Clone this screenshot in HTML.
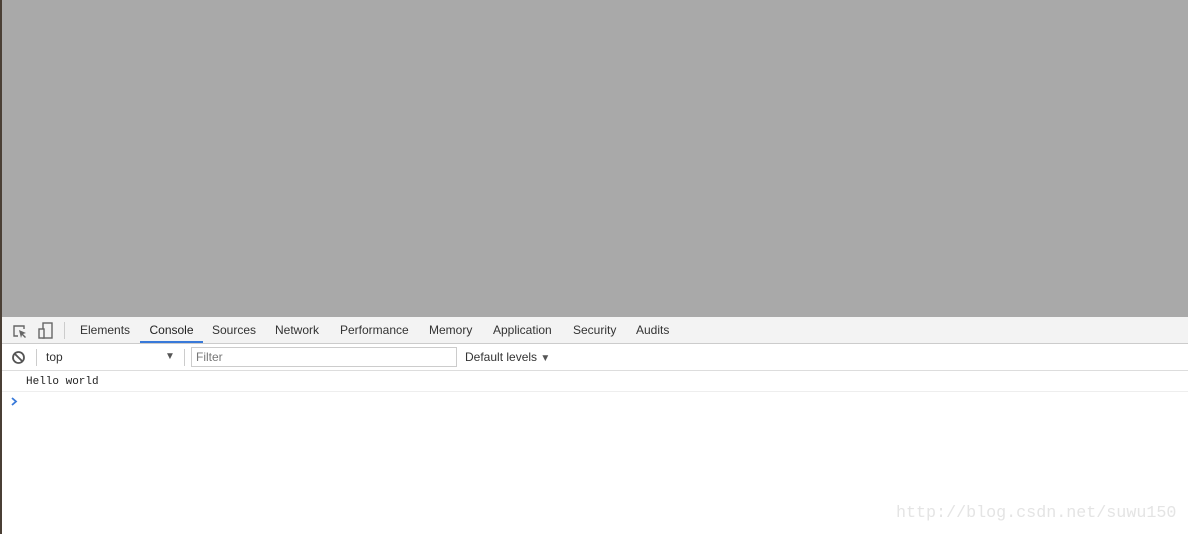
<!DOCTYPE html>
<html><head><meta charset="utf-8"><style>
*{margin:0;padding:0;box-sizing:border-box}
body{width:1188px;height:534px;overflow:hidden;background:#fff;font-family:"Liberation Sans",sans-serif;position:relative}
.page{position:absolute;left:0;top:0;width:1188px;height:317px;background:#a9a9a9}
.edge{position:absolute;left:0;top:0;width:2px;height:534px;background:#4a3f35}
.tb{position:absolute;left:2px;top:317px;width:1186px;height:27px;background:#f3f3f3;border-bottom:1px solid #ccc}
.tab{position:absolute;top:0;height:26px;line-height:26px;font-size:12px;color:#333}
.sel{color:#222;border-bottom:2px solid #3879d9}
.tb2{position:absolute;left:2px;top:344px;width:1186px;height:27px;background:#fff;border-bottom:1px solid #ddd;font-size:12px;color:#333}
.row{position:absolute;left:2px;top:372px;width:1186px;height:20px;border-bottom:1px solid #eee;font-family:"Liberation Mono","DejaVu Sans Mono",monospace;font-size:11px;color:#222;padding-left:24px;padding-top:4px;line-height:13px}
.wm{position:absolute;left:896px;top:504px;font-family:"Liberation Mono",monospace;font-size:16.7px;color:#e4e4e4}
</style></head><body>
<div class="page"></div>
<div class="tb">
<svg style="position:absolute;left:10px;top:6px" width="16" height="16" viewBox="0 0 16 16"><path d="M6 13H2V3h10v3" fill="none" stroke="#666" stroke-width="1.4"/><path d="M7 7l7 3-3 1 3 3-1 1-3-3-1 3z" fill="#666"/></svg>
<svg style="position:absolute;left:36px;top:5px" width="16" height="17" viewBox="0 0 16 17"><rect x="5" y="1" width="9" height="15" fill="none" stroke="#666" stroke-width="1.4"/><rect x="1" y="7" width="5" height="9" fill="#f3f3f3" stroke="#666" stroke-width="1.4"/></svg>
<div style="position:absolute;left:62px;top:5px;width:1px;height:17px;background:#ccc"></div>
<div class="tab" style="left:78px">Elements</div>
<div class="tab sel" style="left:138px;width:63px;text-align:center">Console</div>
<div class="tab" style="left:210px">Sources</div>
<div class="tab" style="left:273px">Network</div>
<div class="tab" style="left:338px">Performance</div>
<div class="tab" style="left:427px">Memory</div>
<div class="tab" style="left:491px">Application</div>
<div class="tab" style="left:571px">Security</div>
<div class="tab" style="left:634px">Audits</div>
</div>
<div class="tb2">
<svg style="position:absolute;left:9px;top:6px" width="15" height="15" viewBox="0 0 15 15"><circle cx="7.5" cy="7.5" r="5.5" fill="none" stroke="#555" stroke-width="1.8"/><path d="M3.7 3.7l7.6 7.6" stroke="#555" stroke-width="1.8"/></svg>
<div style="position:absolute;left:34px;top:5px;width:1px;height:17px;background:#ccc"></div>
<div style="position:absolute;left:44px;top:0;line-height:26px">top</div>
<div style="position:absolute;left:163px;top:0;line-height:26px;font-size:10px;color:#555">▼</div>
<div style="position:absolute;left:182px;top:5px;width:1px;height:17px;background:#ccc"></div>
<div style="position:absolute;left:189px;top:3px;width:266px;height:20px;border:1px solid #ccc;color:#777;padding-left:4px;line-height:18px">Filter</div>
<div style="position:absolute;left:463px;top:0;line-height:26px">Default levels <span style="font-size:10px;color:#555">▼</span></div>
</div>
<div class="row">Hello world</div>
<svg style="position:absolute;left:10px;top:397px" width="8" height="9" viewBox="0 0 8 9"><path d="M2 1l4 3.5L2 8" fill="none" stroke="#3879d9" stroke-width="1.8"/></svg>
<div class="wm">http://blog.csdn.net/suwu150</div>
<div class="edge"></div>
</body></html>
